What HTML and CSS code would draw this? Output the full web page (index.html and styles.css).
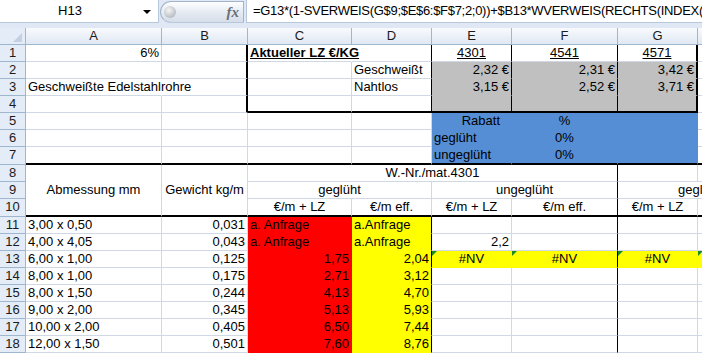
FILE: index.html
```html
<!DOCTYPE html>
<html lang="de">
<head>
    <meta charset="UTF-8">
    <title>Rohrpreise</title>
    <link rel="stylesheet" href="styles.css">
</head>
<body>

<!--Bearbeitungsleiste-->
<div class="fbar">
    <div class="namebox">H13<span class="dd"></span></div>
    <div class="knob"><span class="dot"></span><i class="fx">fx</i></div>
    <div class="formula">=G13*(1-SVERWEIS(G$9;$E$6:$F$7;2;0))+$B13*WVERWEIS(RECHTS(INDEX(</div>
</div>

<!--Tabelle-->
<div class="sheet">
    <div class="corner"></div><div class="ch">A</div><div class="ch">B</div><div class="ch">C</div><div class="ch">D</div><div class="ch">E</div><div class="ch">F</div><div class="ch">G</div><div class="ch"></div>

    <div class="rh">1</div>
    <div class="c r">6%</div>
    <div class="c kr2"></div>
    <div class="c ov nr b u">Aktueller LZ €/KG</div>
    <div class="c kr"></div>
    <div class="c m u kr">4301</div>
    <div class="c m u kr">4541</div>
    <div class="c m u kr2">4571</div>
    <div class="c"></div>

    <div class="rh">2</div>
    <div class="c"></div>
    <div class="c kr2"></div>
    <div class="c"></div>
    <div class="c kr">Geschweißt</div>
    <div class="c gray r kr">2,32 €</div>
    <div class="c gray r kr">2,31 €</div>
    <div class="c gray r kr2">3,42 €</div>
    <div class="c"></div>

    <div class="rh">3</div>
    <div class="c ov nr">Geschweißte Edelstahlrohre</div>
    <div class="c kr2"></div>
    <div class="c"></div>
    <div class="c kr">Nahtlos</div>
    <div class="c gray r kr">3,15 €</div>
    <div class="c gray r kr">2,52 €</div>
    <div class="c gray r kr2">3,71 €</div>
    <div class="c"></div>

    <div class="rh">4</div>
    <div class="c"></div>
    <div class="c kr2"></div>
    <div class="c kb2"></div>
    <div class="c kr kb2"></div>
    <div class="c gray kr kb2"></div>
    <div class="c gray kr kb2"></div>
    <div class="c gray kr2 kb2"></div>
    <div class="c"></div>

    <div class="rh">5</div>
    <div class="c"></div><div class="c"></div><div class="c"></div><div class="c"></div>
    <div class="c blue r pr">Rabatt</div>
    <div class="c blue m">%</div>
    <div class="c blue"></div>
    <div class="c"></div>

    <div class="rh">6</div>
    <div class="c"></div><div class="c"></div><div class="c"></div><div class="c"></div>
    <div class="c blue">geglüht</div>
    <div class="c blue m">0%</div>
    <div class="c blue"></div>
    <div class="c"></div>

    <div class="rh">7</div>
    <div class="c kb2"></div><div class="c kb2"></div><div class="c kb2"></div><div class="c kb2"></div>
    <div class="c blue kb2">ungeglüht</div>
    <div class="c blue m kb2">0%</div>
    <div class="c blue kb2"></div>
    <div class="c kb2"></div>

    <div class="rh">8</div>
    <div class="c mid kb2 rows3">Abmessung mm</div>
    <div class="c mid kb2 rows3">Gewicht kg/m</div>
    <div class="c m kr cols4">W.-Nr./mat.4301</div>
    <div class="c"></div>
    <div class="c"></div>

    <div class="rh">9</div>
    <div class="c m cols2">geglüht</div>
    <div class="c m kr cols2">ungeglüht</div>
    <div class="c g9 cols2">gegl</div>

    <div class="rh">10</div>
    <div class="c m kb2">€/m + LZ</div>
    <div class="c m kb2">€/m eff.</div>
    <div class="c m kb2">€/m + LZ</div>
    <div class="c m kr kb2">€/m eff.</div>
    <div class="c m kb2">€/m + LZ</div>
    <div class="c kb2"></div>

    <div class="rh">11</div>
    <div class="c">3,00 x 0,50</div>
    <div class="c r">0,031</div>
    <div class="c red">a. Anfrage</div>
    <div class="c yel kr">a.Anfrage</div>
    <div class="c"></div><div class="c kr"></div><div class="c"></div><div class="c"></div>

    <div class="rh">12</div>
    <div class="c">4,00 x 4,05</div>
    <div class="c r">0,043</div>
    <div class="c red">a. Anfrage</div>
    <div class="c yel kr">a.Anfrage</div>
    <div class="c r">2,2</div><div class="c kr"></div><div class="c"></div><div class="c"></div>

    <div class="rh">13</div>
    <div class="c">6,00 x 1,00</div>
    <div class="c r">0,125</div>
    <div class="c red r">1,75</div>
    <div class="c yel r kr">2,04</div>
    <div class="c yel m tri">#NV</div>
    <div class="c yel m tri kr">#NV</div>
    <div class="c yel m tri">#NV</div>
    <div class="c yel tri"></div>

    <div class="rh">14</div>
    <div class="c">8,00 x 1,00</div>
    <div class="c r">0,175</div>
    <div class="c red r">2,71</div>
    <div class="c yel r kr">3,12</div>
    <div class="c"></div><div class="c kr"></div><div class="c"></div><div class="c"></div>

    <div class="rh">15</div>
    <div class="c">8,00 x 1,50</div>
    <div class="c r">0,244</div>
    <div class="c red r">4,13</div>
    <div class="c yel r kr">4,70</div>
    <div class="c"></div><div class="c kr"></div><div class="c"></div><div class="c"></div>

    <div class="rh">16</div>
    <div class="c">9,00 x 2,00</div>
    <div class="c r">0,345</div>
    <div class="c red r">5,13</div>
    <div class="c yel r kr">5,93</div>
    <div class="c"></div><div class="c kr"></div><div class="c"></div><div class="c"></div>

    <div class="rh">17</div>
    <div class="c">10,00 x 2,00</div>
    <div class="c r">0,405</div>
    <div class="c red r">6,50</div>
    <div class="c yel r kr">7,44</div>
    <div class="c"></div><div class="c kr"></div><div class="c"></div><div class="c"></div>

    <div class="rh">18</div>
    <div class="c">12,00 x 1,50</div>
    <div class="c r">0,501</div>
    <div class="c red r">7,60</div>
    <div class="c yel r kr">8,76</div>
    <div class="c"></div><div class="c kr"></div><div class="c"></div><div class="c"></div>
</div>

</body>
</html>
```

FILE: styles.css
```css
html,body{ margin: 0; padding: 0;}
body{ width: 702px; height: 353px; overflow: hidden; background: #fff; color: #000; font-family: "Liberation Sans", Arial, sans-serif; font-size: 13px;}

/* Bearbeitungsleiste */
.fbar{ height: 28px; box-sizing: border-box; padding-bottom: 5px; display: flex; background: #dfe8f4;}
.fbar > div{ box-sizing: border-box; border-bottom: 1px solid #b7c7dc;}
.namebox{ position: relative; width: 159px; background: #fff; border-right: 1px solid #b7c7dc; padding-right: 18px; text-align: center; line-height: 22px;}
.dd{ position: absolute; right: 7px; top: 10px; border-left: 4px solid transparent; border-right: 4px solid transparent; border-top: 4px solid #000;}
.knob{ width: 84px; margin: 1px 2px 0 1px; display: flex; align-items: center; justify-content: space-between; padding: 0 4px 0 3px; border: 1px solid #a3b4ca; border-radius: 11px 0 0 11px; background: linear-gradient(#fdfeff, #e4eaf2 55%, #d6dee9);}
.dot{ width: 12px; height: 12px; border-radius: 50%; background: radial-gradient(circle at 40% 35%, #f4f4f4, #a3a9b1);}
.fx{ font-family: "Liberation Serif", serif; font-size: 15px; font-weight: bold; color: #6b6f75;}
.formula{ flex: 1; min-width: 0; background: #fff; padding-left: 6px; line-height: 22px; letter-spacing: -0.3px; white-space: nowrap; overflow: hidden; border-left: 1px solid #b7c7dc;}

/* Tabelle */
.sheet{ display: grid; grid-template-columns: 26px 136px 86px 104px 80px 80px 106px 80px 1fr; grid-template-rows: repeat(7,17px) 18px 17px 17px 18px repeat(8,17px);}
.sheet > div{ box-sizing: border-box; min-width: 0; white-space: nowrap; line-height: 16px;}
.corner,.ch,.rh{ border-right: 1px solid #9eb6ce; border-bottom: 1px solid #9eb6ce; overflow: hidden; color: #1b1b1b;}
.corner{ position: relative; background: #e4ecf7;}
.corner:after{ content: ""; position: absolute; right: 3px; bottom: 2px; border-left: 9px solid transparent; border-bottom: 9px solid #c4d0e1;}
.ch{ background: linear-gradient(#f8fafd, #e0e8f3); text-align: center;}
.rh{ background: #e4ecf7; text-align: center;}

.c{ padding: 0 2px; overflow: hidden; border-right: 1px solid #d0d7e5; border-bottom: 1px solid #d0d7e5;}
.ov{ overflow: visible;}
.r{ text-align: right;}
.m{ text-align: center;}
.b{ font-weight: bold;}
.u{ text-decoration: underline;}
.pr{ padding-right: 11px;}
.g9{ padding-left: 60px;}
.mid{ display: flex; align-items: center; justify-content: center;}
.rows3{ grid-row: span 3;}
.cols2{ grid-column: span 2;}
.cols4{ grid-column: span 4;}

/* Füllungen */
.gray{ background: #c0c0c0; border-color: #c0c0c0;}
.blue{ background: #558ed5; border-color: #558ed5;}
.red{ background: #ff0000; border-color: #ff0000;}
.yel{ background: #ffff00; border-color: #ffff00;}

/* Rahmen */
.nr{ border-right-color: transparent;}
.kr{ border-right-color: #000;}
.kr2{ border-right: 2px solid #000;}
.kb2{ border-bottom: 2px solid #000;}

.tri{ position: relative;}
.tri:before{ content: ""; position: absolute; left: 0; top: 0; border-top: 5px solid #1c8a1c; border-right: 5px solid transparent;}
```
